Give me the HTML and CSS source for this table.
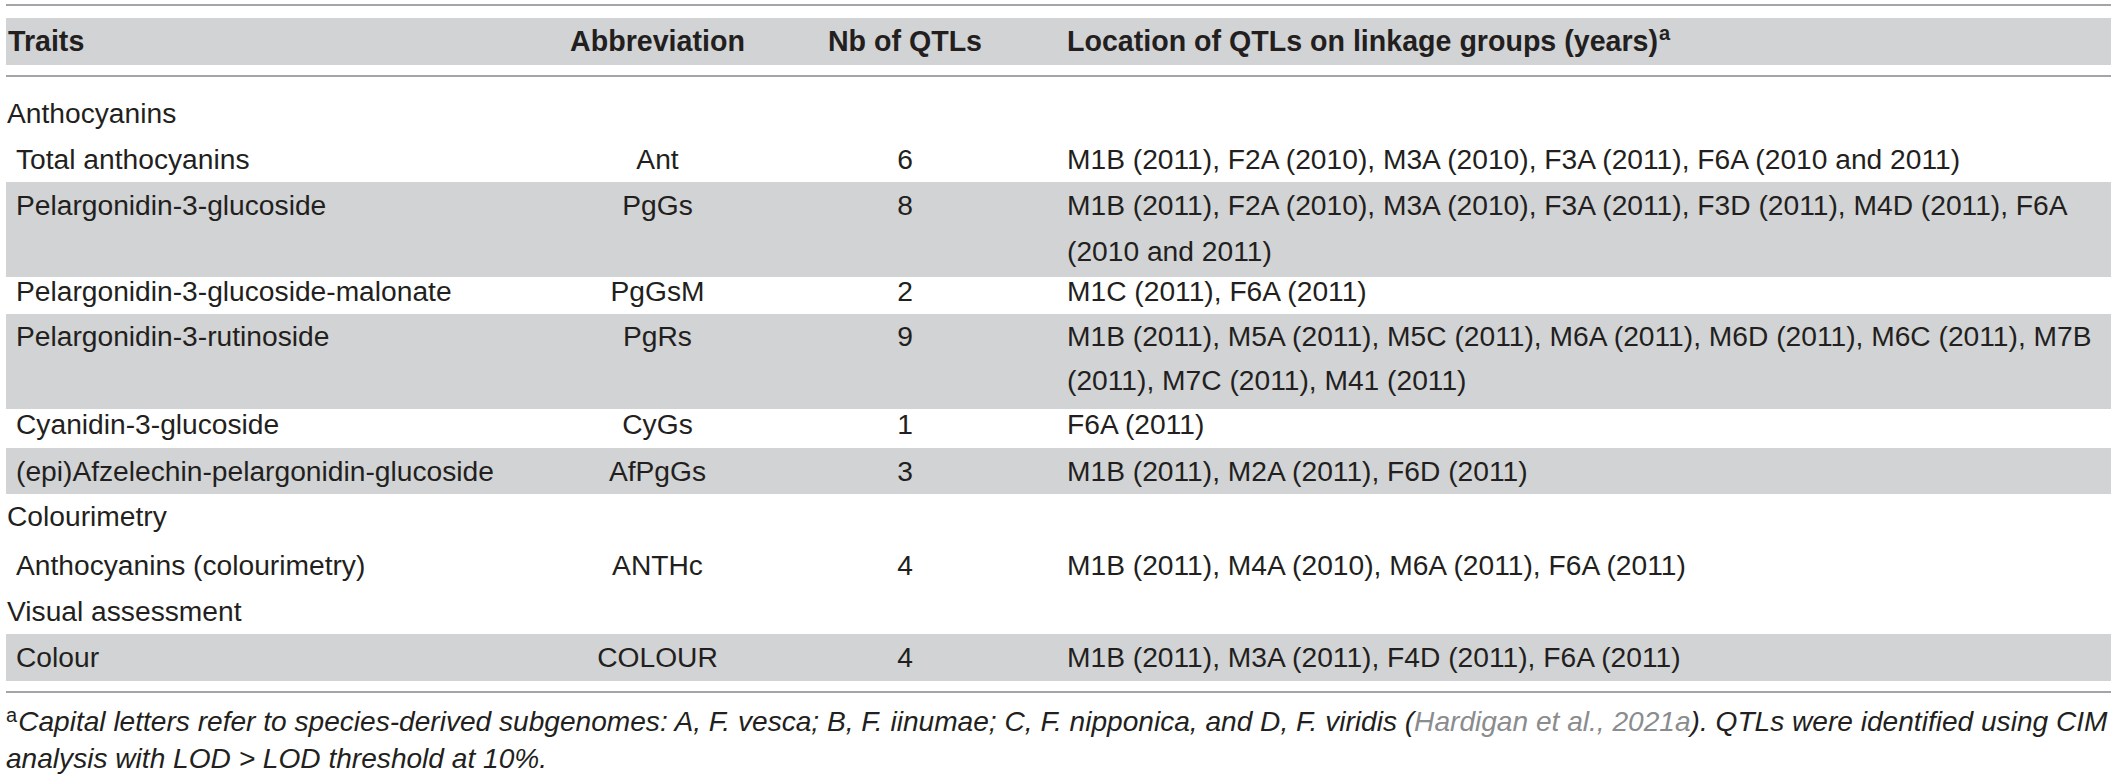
FILE: index.html
```html
<!DOCTYPE html>
<html lang="en">
<head>
  <meta charset="UTF-8" />
  <title>QTLs for anthocyanin traits</title>
  <link rel="stylesheet" href="styles.css">
</head>
<body>
  <div class="page">
    <div class="qtl-table">
      <div class="rule"></div>

      <!-- Header -->
      <div class="row head">
        <div class="cell trait">Traits</div>
        <div class="cell mid">Abbreviation</div>
        <div class="cell mid">Nb of QTLs</div>
        <div class="cell loc">Location of QTLs on linkage groups (years)<sup>a</sup></div>
      </div>

      <div class="rule"></div>

      <div class="body">
        <div class="section">Anthocyanins</div>
        <div class="row">
          <div class="cell trait">Total anthocyanins</div>
          <div class="cell mid">Ant</div>
          <div class="cell mid">6</div>
          <div class="cell loc">M1B (2011), F2A (2010), M3A (2010), F3A (2011), F6A (2010 and 2011)</div>
        </div>
        <div class="row two shade">
          <div class="cell trait">Pelargonidin-3-glucoside</div>
          <div class="cell mid">PgGs</div>
          <div class="cell mid">8</div>
          <div class="cell loc">M1B (2011), F2A (2010), M3A (2010), F3A (2011), F3D (2011), M4D (2011), F6A<br>(2010 and 2011)</div>
        </div>
        <div class="row tight">
          <div class="cell trait">Pelargonidin-3-glucoside-malonate</div>
          <div class="cell mid">PgGsM</div>
          <div class="cell mid">2</div>
          <div class="cell loc">M1C (2011), F6A (2011)</div>
        </div>
        <div class="row two shade up">
          <div class="cell trait">Pelargonidin-3-rutinoside</div>
          <div class="cell mid">PgRs</div>
          <div class="cell mid">9</div>
          <div class="cell loc">M1B (2011), M5A (2011), M5C (2011), M6A (2011), M6D (2011), M6C (2011), M7B<br>(2011), M7C (2011), M41 (2011)</div>
        </div>
        <div class="row tight wide">
          <div class="cell trait">Cyanidin-3-glucoside</div>
          <div class="cell mid">CyGs</div>
          <div class="cell mid">1</div>
          <div class="cell loc">F6A (2011)</div>
        </div>
        <div class="row shade">
          <div class="cell trait">(epi)Afzelechin-pelargonidin-glucoside</div>
          <div class="cell mid">AfPgGs</div>
          <div class="cell mid">3</div>
          <div class="cell loc">M1B (2011), M2A (2011), F6D (2011)</div>
        </div>

        <div class="section short">Colourimetry</div>
        <div class="row drop">
          <div class="cell trait">Anthocyanins (colourimetry)</div>
          <div class="cell mid">ANTHc</div>
          <div class="cell mid">4</div>
          <div class="cell loc">M1B (2011), M4A (2010), M6A (2011), F6A (2011)</div>
        </div>

        <div class="section">Visual assessment</div>
        <div class="row shade last">
          <div class="cell trait">Colour</div>
          <div class="cell mid">COLOUR</div>
          <div class="cell mid">4</div>
          <div class="cell loc">M1B (2011), M3A (2011), F4D (2011), F6A (2011)</div>
        </div>
      </div>

      <div class="rule"></div>
    </div>

    <!-- Footnote -->
    <p class="note">
      <span class="line"><sup>a</sup><em>Capital letters refer to species-derived subgenomes: A, F. vesca; B, F. iinumae; C, F. nipponica, and D, F. viridis (<a class="ref" href="#">Hardigan et al., 2021a</a>). QTLs were identified using CIM</em></span>
      <span class="line"><em>analysis with LOD &gt; LOD threshold at 10%.</em></span>
    </p>
  </div>
</body>
</html>
```

FILE: styles.css
```css
body {
  margin: 0;
  padding: 0;
  background: #fff;
  color: #231f20;
  font-family: "Liberation Sans", Arial, sans-serif;
  font-size: 28.2px;
}
.page {
  padding: 4px 7px 0 6px;
}
.rule {
  height: 2px;
  background: #a3a5a8;
}

/* rows share one column grid */
.row {
  display: grid;
  grid-template-columns: 534px 235px 260px 1fr;
  height: 46px;
  line-height: 46px;
  white-space: nowrap;
}
.shade {
  background: #d1d3d4;
}
.cell.trait {
  padding-left: 10px;
}
.cell.mid {
  text-align: center;
}
.cell.loc {
  padding-left: 32px;
}

.head {
  margin: 12px 0 10px;
  height: 47px;
  line-height: 47px;
  background: #d1d3d4;
  font-weight: bold;
  font-size: 28.6px;
}
.head .cell.trait {
  padding-left: 2px;
}
.head sup {
  font-size: 20px;
  line-height: 0;
  vertical-align: 11px;
  margin-left: 1px;
}

.body {
  padding-top: 13px;
}
.section {
  height: 46px;
  line-height: 46px;
  padding-left: 1px;
}
.section.short {
  height: 44px;
  line-height: 44px;
}
.row.two {
  height: 95px;
  box-sizing: border-box;
  padding-bottom: 3px;
}
.row.two.up {
  line-height: 44px;
  padding-bottom: 7px;
}
.row.tight {
  height: 37px;
  line-height: 28px;
}
.row.tight.wide {
  height: 39px;
  line-height: 30px;
}
.row.drop {
  height: 50px;
  line-height: 54px;
}
.row.last {
  height: 47px;
  line-height: 47px;
  margin-bottom: 10px;
}

.note {
  margin: 10px 0 0;
  font-size: 28.1px;
  line-height: 37px;
  white-space: nowrap;
}
.note .line {
  display: block;
}
.note sup {
  font-size: 20px;
  line-height: 0;
  vertical-align: 9px;
  margin-right: 1px;
}
.note .ref {
  color: #8a8c8e;
  text-decoration: none;
}
```
